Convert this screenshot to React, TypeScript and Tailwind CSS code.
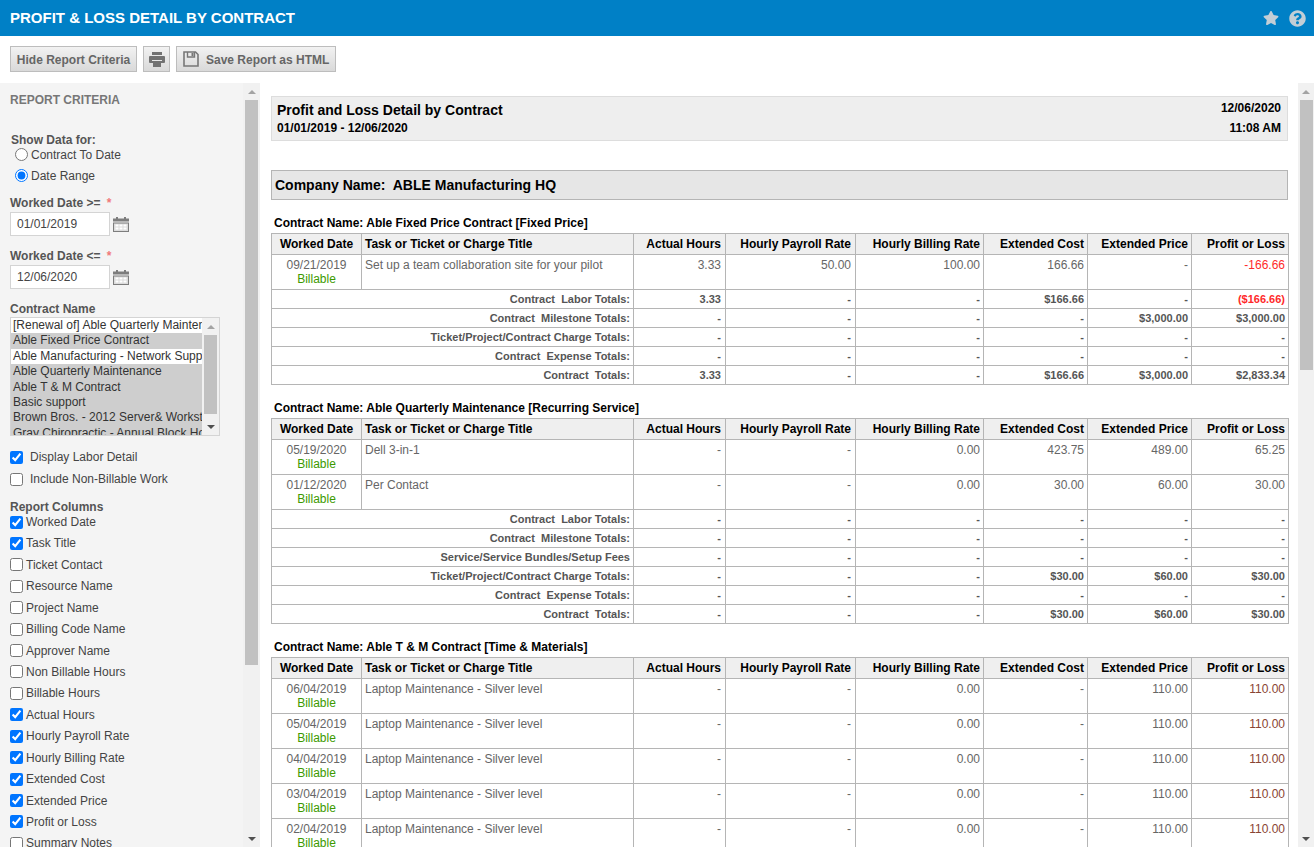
import { FaQuestionCircle, FaStar } from 'react-icons/fa';

type Row = { date: string; title: string; cells: string[]; red?: boolean; brown?: boolean };
type Total = { label: string; cells: string[]; red?: boolean };
type Contract = { name: string; rows: Row[]; totals: Total[] };

const headers = ['Actual Hours', 'Hourly Payroll Rate', 'Hourly Billing Rate', 'Extended Cost', 'Extended Price', 'Profit or Loss'];

const contracts: Contract[] = [
  {
    name: 'Able Fixed Price Contract [Fixed Price]',
    rows: [
      { date: '09/21/2019', title: 'Set up a team collaboration site for your pilot', cells: ['3.33', '50.00', '100.00', '166.66', '-', '-166.66'], red: true },
    ],
    totals: [
      { label: 'Contract  Labor Totals:', cells: ['3.33', '-', '-', '$166.66', '-', '($166.66)'], red: true },
      { label: 'Contract  Milestone Totals:', cells: ['-', '-', '-', '-', '$3,000.00', '$3,000.00'] },
      { label: 'Ticket/Project/Contract Charge Totals:', cells: ['-', '-', '-', '-', '-', '-'] },
      { label: 'Contract  Expense Totals:', cells: ['-', '-', '-', '-', '-', '-'] },
      { label: 'Contract  Totals:', cells: ['3.33', '-', '-', '$166.66', '$3,000.00', '$2,833.34'] },
    ],
  },
  {
    name: 'Able Quarterly Maintenance [Recurring Service]',
    rows: [
      { date: '05/19/2020', title: 'Dell 3-in-1', cells: ['-', '-', '0.00', '423.75', '489.00', '65.25'] },
      { date: '01/12/2020', title: 'Per Contact', cells: ['-', '-', '0.00', '30.00', '60.00', '30.00'] },
    ],
    totals: [
      { label: 'Contract  Labor Totals:', cells: ['-', '-', '-', '-', '-', '-'] },
      { label: 'Contract  Milestone Totals:', cells: ['-', '-', '-', '-', '-', '-'] },
      { label: 'Service/Service Bundles/Setup Fees', cells: ['-', '-', '-', '-', '-', '-'] },
      { label: 'Ticket/Project/Contract Charge Totals:', cells: ['-', '-', '-', '$30.00', '$60.00', '$30.00'] },
      { label: 'Contract  Expense Totals:', cells: ['-', '-', '-', '-', '-', '-'] },
      { label: 'Contract  Totals:', cells: ['-', '-', '-', '$30.00', '$60.00', '$30.00'] },
    ],
  },
  {
    name: 'Able T & M Contract [Time & Materials]',
    rows: ['06/04/2019', '05/04/2019', '04/04/2019', '03/04/2019', '02/04/2019'].map((date) => ({
      date,
      title: 'Laptop Maintenance - Silver level',
      cells: ['-', '-', '0.00', '-', '110.00', '110.00'],
      brown: true,
    })),
    totals: [],
  },
];

const contractOptions = [
  { name: '[Renewal of] Able Quarterly Maintenance', selected: false },
  { name: 'Able Fixed Price Contract', selected: true },
  { name: 'Able Manufacturing - Network Support', selected: false },
  { name: 'Able Quarterly Maintenance', selected: true },
  { name: 'Able T & M Contract', selected: true },
  { name: 'Basic support', selected: true },
  { name: 'Brown Bros. - 2012 Server& Workstation', selected: true },
  { name: 'Gray Chiropractic - Annual Block Hours', selected: true },
];

const reportColumns = [
  { name: 'Worked Date', checked: true },
  { name: 'Task Title', checked: true },
  { name: 'Ticket Contact', checked: false },
  { name: 'Resource Name', checked: false },
  { name: 'Project Name', checked: false },
  { name: 'Billing Code Name', checked: false },
  { name: 'Approver Name', checked: false },
  { name: 'Non Billable Hours', checked: false },
  { name: 'Billable Hours', checked: false },
  { name: 'Actual Hours', checked: true },
  { name: 'Hourly Payroll Rate', checked: true },
  { name: 'Hourly Billing Rate', checked: true },
  { name: 'Extended Cost', checked: true },
  { name: 'Extended Price', checked: true },
  { name: 'Profit or Loss', checked: true },
  { name: 'Summary Notes', checked: false },
];

const CalendarIcon = () => (
  <svg width="16" height="15" viewBox="0 0 16 15" className="shrink-0">
    <rect x="0" y="1.5" width="16" height="3" fill="#7d7d7d" />
    <rect x="3" y="0" width="2" height="2" fill="#7d7d7d" />
    <rect x="11" y="0" width="2" height="2" fill="#7d7d7d" />
    <rect x="0" y="5.5" width="16" height="9.5" fill="#7d7d7d" />
    <rect x="1" y="6.5" width="14" height="7.5" fill="#dcdcdc" />
    <path d="M2.5 7.5h3v2h-3zM6.5 7.5h3v2h-3zM10.5 7.5h3v2h-3zM2.5 10.5h3v2h-3zM6.5 10.5h3v2h-3zM10.5 10.5h3v2h-3z" fill="#fff" />
  </svg>
);

const PrintIcon = () => (
  <svg width="16" height="15" viewBox="0 0 16 15">
    <rect x="3" y="0" width="10" height="3" fill="#727272" />
    <rect x="0" y="4" width="16" height="7" rx="1" fill="#727272" />
    <rect x="3" y="8" width="10" height="1" fill="#e8e8e8" />
    <rect x="4" y="9" width="8" height="6" fill="#727272" />
  </svg>
);

const SaveIcon = () => (
  <svg width="16" height="16" viewBox="0 0 16 16">
    <path d="M1 1h11.5L15 3.5V15H1z" fill="none" stroke="#777" strokeWidth="1.6" />
    <path d="M4.5 1v5h7V1" fill="none" stroke="#777" strokeWidth="1.4" />
    <rect x="8.5" y="2" width="2" height="3" fill="#777" />
  </svg>
);

const ScrollBar = ({ thumb }: { thumb: string }) => (
  <div className="flex flex-col w-full h-full bg-[#f1f1f1]">
    <div className="h-[17px] w-full flex items-center justify-center shrink-0">
      <div className="w-0 h-0 border-x-[4px] border-x-transparent border-b-[4px] border-b-[#a3a3a3]" />
    </div>
    <div className={`ml-[2px] w-[13px] bg-[#c1c1c1] ${thumb}`} />
    <div className="mt-auto h-[17px] w-full flex items-center justify-center shrink-0">
      <div className="w-0 h-0 border-x-[4px] border-x-transparent border-t-[4px] border-t-[#505050]" />
    </div>
  </div>
);

const DateField = ({ label, value }: { label: string; value: string }) => (
  <div className="flex flex-col">
    <div className="h-[17px] leading-[17px] font-bold text-[#555]">
      {label} <span className="text-[#f07a7a] ml-[3px]">*</span>
    </div>
    <div className="flex items-center gap-[3px]">
      <div className="w-[100px] h-[24px] border border-[#d4d4d4] bg-white pl-[6px] leading-[22px] text-[#444]">{value}</div>
      <CalendarIcon />
    </div>
  </div>
);

const ContractTable = ({ contract }: { contract: Contract }) => (
  <div className="flex flex-col">
    <div className="h-[18px] leading-[17px] pl-[3px] font-bold text-black">Contract Name: {contract.name}</div>
    <table className="w-[1017px] table-fixed border-collapse border border-[#b5b5b5]">
      <colgroup>
        <col className="w-[90px]" />
        <col className="w-[272px]" />
        <col className="w-[92px]" />
        <col className="w-[130px]" />
        <col className="w-[128px]" />
        <col className="w-[104px]" />
        <col className="w-[104px]" />
        <col className="w-[97px]" />
      </colgroup>
      <thead>
        <tr className="h-[21px] bg-[#efefef] font-bold text-black">
          <th className="border border-[#b5b5b5] text-center font-bold p-0">Worked Date</th>
          <th className="border border-[#b5b5b5] text-left font-bold py-0 px-[3px]">Task or Ticket or Charge Title</th>
          {headers.map((h, i) => (
            <th key={h} className={`border border-[#b5b5b5] text-right font-bold py-0 pl-[3px] ${i < 2 ? 'pr-[4px]' : 'pr-[3px]'}`}>{h}</th>
          ))}
        </tr>
      </thead>
      <tbody>
        {contract.rows.map((row) => (
          <tr key={row.date + row.title} className="h-[35px] align-top text-[#666]">
            <td className="border border-[#b5b5b5] text-center p-0 pt-[3px] leading-[14px]">
              <div>{row.date}</div>
              <div className="text-[#3c9a00]">Billable</div>
            </td>
            <td className="border border-[#b5b5b5] px-[3px] pt-[3px] pb-0 leading-[14px] whitespace-nowrap overflow-hidden">{row.title}</td>
            {row.cells.map((c, i) => (
              <td
                key={i}
                className={`border border-[#b5b5b5] text-right pl-[3px] pt-[3px] pb-0 leading-[14px] ${i < 2 ? 'pr-[4px]' : 'pr-[3px]'} ${
                  i === 5 && row.red ? 'text-[#ff2a2a]' : i === 5 && row.brown ? 'text-[#8a4433]' : ''
                }`}
              >
                {c}
              </td>
            ))}
          </tr>
        ))}
        {contract.totals.map((t) => (
          <tr key={t.label} className="h-[19px] text-[11px] font-bold text-[#555]">
            <td colSpan={2} className="border border-[#b5b5b5] text-right py-0 px-[3px] whitespace-pre">{t.label}</td>
            {t.cells.map((c, i) => (
              <td
                key={i}
                className={`border border-[#b5b5b5] text-right py-0 pl-[3px] ${i < 2 ? 'pr-[4px]' : 'pr-[3px]'} ${i === 5 && t.red ? 'text-[#ff2a2a]' : ''}`}
              >
                {c}
              </td>
            ))}
          </tr>
        ))}
      </tbody>
    </table>
  </div>
);

export default function App() {
  return (
    <div className="h-[847px] w-[1314px] overflow-hidden flex flex-col bg-white text-[12px] font-[Liberation_Sans,Arial,sans-serif]">
      {/* Title bar */}
      <div className="h-[36px] shrink-0 bg-[#0080c6] flex items-center justify-between pl-[10px] pr-[8px]">
        <div className="text-[15px] font-bold text-white">PROFIT &amp; LOSS DETAIL BY CONTRACT</div>
        <div className="flex items-center gap-[10px] text-[#c3ced6]">
          <FaStar size={16} />
          <FaQuestionCircle size={17} />
        </div>
      </div>

      {/* Toolbar */}
      <div className="h-[47px] shrink-0 flex items-start gap-[6px] pl-[10px] pt-[10px]">
        <button className="h-[26px] w-[127px] pt-[1px] border border-[#bdbdbd] bg-gradient-to-b from-[#f2f2f2] to-[#d9d9d9] font-bold text-[#666]">
          Hide Report Criteria
        </button>
        <button className="h-[26px] w-[27px] border border-[#bdbdbd] bg-gradient-to-b from-[#f2f2f2] to-[#d9d9d9] flex items-center justify-center">
          <PrintIcon />
        </button>
        <button className="h-[26px] w-[160px] border border-[#bdbdbd] bg-gradient-to-b from-[#f2f2f2] to-[#d9d9d9] font-bold text-[#666] flex items-center gap-[7px] pl-[6px]">
          <SaveIcon />
          <span className="pt-[1px]">Save Report as HTML</span>
        </button>
      </div>

      <div className="flex-1 min-h-0 flex">
        {/* Criteria panel */}
        <div className="w-[260px] shrink-0 flex">
          <div className="w-[243px] shrink-0 bg-[#f4f4f4] overflow-hidden pl-[10px] text-[#444]">
            <div className="pt-[8px] h-[50px] font-bold text-[#777]">REPORT CRITERIA</div>
            <div className="pl-[1px] h-[11px] leading-[14px] font-bold text-[#555]">Show Data for:</div>
            <label className="flex items-center h-[21px] pl-[5px] gap-[3px]">
              <input type="radio" name="show" className="m-0 w-[13px] h-[13px]" />
              Contract To Date
            </label>
            <label className="flex items-center h-[21px] pl-[5px] gap-[3px]">
              <input type="radio" name="show" defaultChecked className="m-0 w-[13px] h-[13px]" />
              Date Range
            </label>
            <div className="flex flex-col gap-[12px] pt-[9px]">
              <DateField label="Worked Date >=" value="01/01/2019" />
              <DateField label="Worked Date <=" value="12/06/2020" />
            </div>
            <div className="h-[16px] mt-[12px] leading-[17px] font-bold text-[#555]">Contract Name</div>
            <div className="w-[210px] h-[119px] border border-[#d4d4d4] bg-white flex overflow-hidden">
              <div className="w-[191px] shrink-0 text-[#333] overflow-hidden">
                {contractOptions.map((o) => (
                  <div
                    key={o.name}
                    className={`h-[15.4px] leading-[15.4px] pl-[2px] whitespace-nowrap overflow-hidden ${o.selected ? 'bg-[#cecece]' : 'bg-white'}`}
                  >
                    {o.name}
                  </div>
                ))}
              </div>
              <div className="flex-1 flex flex-col bg-[#f1f1f1]">
                <div className="h-[17px] w-full flex items-center justify-center shrink-0">
                  <div className="w-0 h-0 border-x-[4px] border-x-transparent border-b-[4px] border-b-[#a3a3a3]" />
                </div>
                <div className="ml-[2px] w-[13px] h-[79px] bg-[#c1c1c1]" />
                <div className="mt-auto h-[17px] w-full flex items-center justify-center shrink-0">
                  <div className="w-0 h-0 border-x-[4px] border-x-transparent border-t-[4px] border-t-[#505050]" />
                </div>
              </div>
            </div>
            <div className="pt-[10px]">
              <label className="flex items-center h-[22px] gap-[7px]">
                <input type="checkbox" defaultChecked className="m-0 w-[13px] h-[13px]" />
                Display Labor Detail
              </label>
              <label className="flex items-center h-[22px] gap-[7px]">
                <input type="checkbox" className="m-0 w-[13px] h-[13px]" />
                Include Non-Billable Work
              </label>
            </div>
            <div className="h-[14px] mt-[10px] leading-[14px] font-bold text-[#555]">Report Columns</div>
            <div className="-mt-[2.7px]">
              {reportColumns.map((c) => (
                <label key={c.name} className="flex items-center h-[21.43px] gap-[3px]">
                  <input type="checkbox" defaultChecked={c.checked} className="m-0 w-[13px] h-[13px]" />
                  {c.name}
                </label>
              ))}
            </div>
          </div>
          <div className="w-[17px] shrink-0">
            <ScrollBar thumb="h-[565px]" />
          </div>
        </div>

        {/* Report */}
        <div className="flex-1 min-w-0 flex">
          <div className="flex-1 min-w-0 overflow-hidden pl-[11px] pt-[13px]">
            <div className="w-[1017px] h-[45px] bg-[#eeeeee] border border-[#dddddd] flex justify-between pl-[5px] pr-[6px] pt-[4px] font-bold text-black">
              <div>
                <div className="text-[14px] h-[19px] leading-[18px]">Profit and Loss Detail by Contract</div>
                <div className="leading-[14px] pt-[1px]">01/01/2019 - 12/06/2020</div>
              </div>
              <div className="text-right">
                <div className="h-[20px] leading-[14px]">12/06/2020</div>
                <div className="leading-[14px]">11:08 AM</div>
              </div>
            </div>
            <div className="w-[1017px] h-[30px] mt-[29px] bg-[#e6e6e6] border border-[#b5b5b5] flex items-center pl-[3px] text-[14px] font-bold text-black whitespace-pre">
              Company Name:  ABLE Manufacturing HQ
            </div>
            <div className="flex flex-col gap-[15px] pt-[15px]">
              {contracts.map((c) => (
                <ContractTable key={c.name} contract={c} />
              ))}
            </div>
          </div>
          <div className="w-[16px] shrink-0 ml-auto">
            <ScrollBar thumb="h-[270px]" />
          </div>
        </div>
      </div>
    </div>
  );
}
